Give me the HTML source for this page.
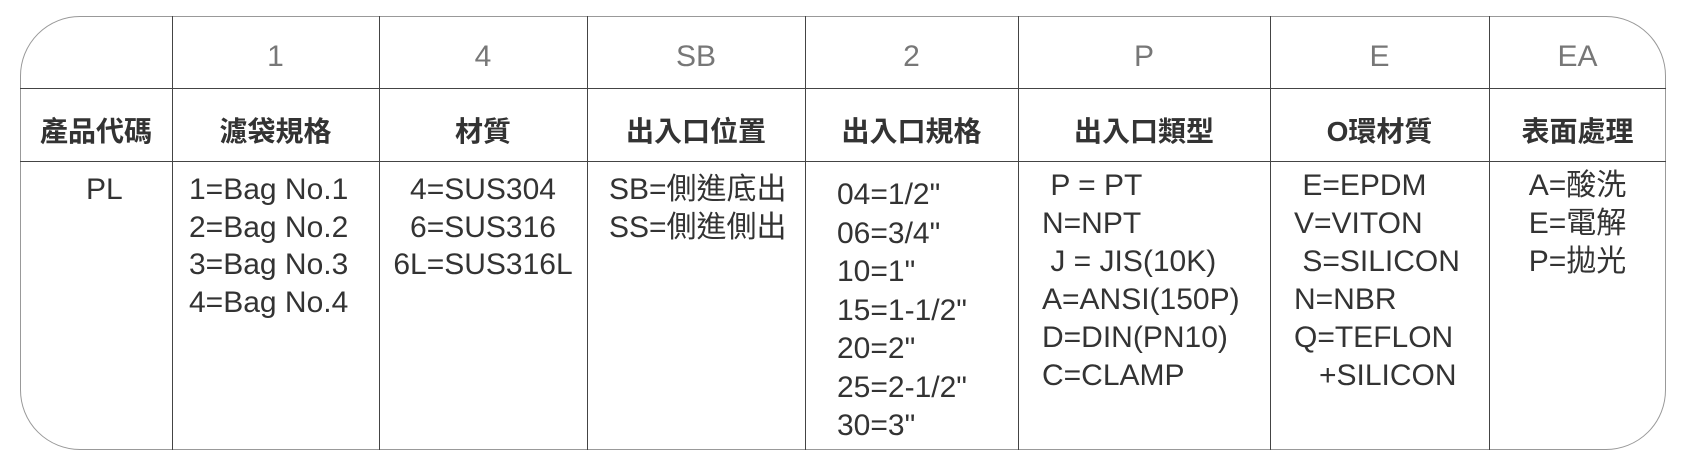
<!DOCTYPE html>
<html><head><meta charset="utf-8"><style>
body{margin:0;width:1687px;height:466px;background:#fff;position:relative;overflow:hidden;font-family:"Liberation Sans","Noto Sans CJK TC",sans-serif;color:#333}
.box{position:absolute;left:20px;top:16px;width:1646px;height:434px;border:1.5px solid #999;border-radius:60px;box-sizing:border-box}
.v{position:absolute;top:16px;height:434px;width:1px;background:#444}
.h{position:absolute;left:20px;width:1646px;height:1px;background:#444}
.c{position:absolute;text-align:center}
.n{font-size:30px;color:#777;font-weight:300;top:40px}
.l{font-size:28px;font-weight:bold;top:110px;color:#333}
.t{position:absolute;font-size:30px;letter-spacing:0;line-height:37.5px;white-space:pre;color:#333}
</style></head><body>
<div class="box"></div>
<div class="v" style="left:172px"></div>
<div class="v" style="left:379px"></div>
<div class="v" style="left:587px"></div>
<div class="v" style="left:805px"></div>
<div class="v" style="left:1018px"></div>
<div class="v" style="left:1270px"></div>
<div class="v" style="left:1489px"></div>
<div class="h" style="top:88px"></div>
<div class="h" style="top:161px"></div>

<div class="c n" style="left:172px;width:207px">1</div>
<div class="c n" style="left:379px;width:208px">4</div>
<div class="c n" style="left:587px;width:218px">SB</div>
<div class="c n" style="left:805px;width:213px">2</div>
<div class="c n" style="left:1018px;width:252px">P</div>
<div class="c n" style="left:1270px;width:219px">E</div>
<div class="c n" style="left:1489px;width:177px">EA</div>

<div class="c l" style="left:20px;width:152px">產品代碼</div>
<div class="c l" style="left:172px;width:207px">濾袋規格</div>
<div class="c l" style="left:379px;width:208px">材質</div>
<div class="c l" style="left:587px;width:218px">出入口位置</div>
<div class="c l" style="left:805px;width:213px">出入口規格</div>
<div class="c l" style="left:1018px;width:252px">出入口類型</div>
<div class="c l" style="left:1270px;width:219px">O環材質</div>
<div class="c l" style="left:1489px;width:177px">表面處理</div>

<div class="t" style="left:86px;top:171px">PL</div>
<div class="t" style="left:189px;top:171px">1=Bag No.1
2=Bag No.2
3=Bag No.3
4=Bag No.4</div>
<div class="t" style="left:379px;width:208px;top:171px;text-align:center">4=SUS304
6=SUS316
6L=SUS316L</div>
<div class="t" style="left:609px;top:171px">SB=側進底出
SS=側進側出</div>
<div class="t" style="left:837px;top:176px;line-height:38.5px">04=1/2"
06=3/4"
10=1"
15=1-1/2"
20=2"
25=2-1/2"
30=3"</div>
<div class="t" style="left:1042px;top:167px;line-height:38px"> P = PT
N=NPT
 J = JIS(10K)
A=ANSI(150P)
D=DIN(PN10)
C=CLAMP</div>
<div class="t" style="left:1294px;top:167px;line-height:38px"> E=EPDM
V=VITON
 S=SILICON
N=NBR
Q=TEFLON
   +SILICON</div>
<div class="t" style="left:1489px;width:177px;top:167px;text-align:center;line-height:38px">A=酸洗
E=電解
P=拋光</div>
</body></html>
